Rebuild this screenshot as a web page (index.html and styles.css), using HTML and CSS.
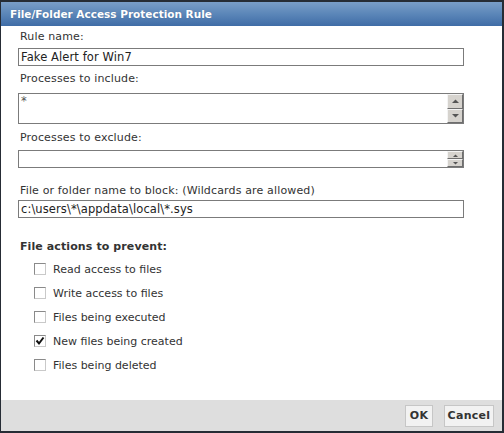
FILE: index.html
```html
<!DOCTYPE html>
<html>
<head>
<meta charset="utf-8">
<link rel="stylesheet" href="styles.css">
</head>
<body>
<div class="dialog">
  <div class="titlebar">File/Folder Access Protection Rule</div>
  <div class="content">
    <div class="label l1">Rule name:</div>
    <div class="field">Fake Alert for Win7</div>
    <div class="label l2">Processes to include:</div>
    <div class="field area">
      <div class="area-text">*</div>
      <div class="scroll tall">
        <div class="sbtn"><svg width="7" height="4" viewBox="0 0 7 4"><path d="M0 4L3.5 0.5L7 4Z" fill="#555"/></svg></div>
        <div class="sbtn"><svg width="7" height="4" viewBox="0 0 7 4"><path d="M0 0L3.5 3.5L7 0Z" fill="#555"/></svg></div>
      </div>
    </div>
    <div class="label l3">Processes to exclude:</div>
    <div class="field area short">
      <div class="area-text"></div>
      <div class="scroll">
        <div class="sbtn"><svg width="5" height="3" viewBox="0 0 5 3"><path d="M0 3L2.5 0.5L5 3Z" fill="#555"/></svg></div>
        <div class="sbtn"><svg width="5" height="3" viewBox="0 0 5 3"><path d="M0 0L2.5 2.5L5 0Z" fill="#555"/></svg></div>
      </div>
    </div>
    <div class="label l4">File or folder name to block: (Wildcards are allowed)</div>
    <div class="field f4">c:\users\*\appdata\local\*.sys</div>
    <div class="label bold">File actions to prevent:</div>
    <div class="checks">
      <div class="check"><span class="box"></span>Read access to files</div>
      <div class="check"><span class="box"></span>Write access to files</div>
      <div class="check"><span class="box"></span>Files being executed</div>
      <div class="check"><span class="box"><svg width="10" height="10" viewBox="0 0 10 10"><path d="M1.5 4.5L4 7.5L8.5 1.5" stroke="#111" stroke-width="2" fill="none"/></svg></span>New files being created</div>
      <div class="check"><span class="box"></span>Files being deleted</div>
    </div>
  </div>
  <div class="footer">
    <button class="btn ok">OK</button>
    <button class="btn cancel">Cancel</button>
  </div>
</div>
</body>
</html>
```
FILE: styles.css
```css
html, body {
  margin: 0;
  padding: 0;
}
body {
  width: 504px;
  height: 433px;
  background: #262c35;
  overflow: hidden;
  font-family: "DejaVu Sans", Verdana, sans-serif;
}
.dialog {
  margin: 2px 2px 0 1px;
  width: 501px;
  height: 429px;
  background: #fff;
  display: flex;
  flex-direction: column;
}
.titlebar {
  height: 24px;
  line-height: 24px;
  padding-left: 9px;
  color: #fff;
  font-weight: bold;
  font-size: 10.5px;
  background: linear-gradient(#7a9ec8, #5b86b8 50%, #3f6ca6);
  text-shadow: 0 0 1px rgba(0,0,0,0.2);
}
.content {
  flex: 1;
  padding: 4px 0 0 17px;
  color: #333;
  font-size: 11px;
}
.label {
  height: 14px;
  line-height: 14px;
  padding-left: 2px;
  letter-spacing: 0.15px;
}
.l1 { margin-bottom: 4px; }
.l2 { margin-top: 6px; margin-bottom: 7px; }
.l3 { margin-top: 7px; margin-bottom: 5px; }
.l4 { margin-top: 16px; margin-bottom: 2px; }
.bold { font-weight: bold; margin-top: 22px; letter-spacing: 0.1px; }
.field {
  box-sizing: border-box;
  width: 446px;
  height: 18px;
  border: 1px solid #7b7b7b;
  padding-left: 2px;
  line-height: 16px;
  font-size: 11.5px;
  color: #222;
  letter-spacing: 0.1px;
}
.area {
  height: 31px;
  display: flex;
  padding-left: 0;
}
.area.short { height: 18px; }
.area-text {
  flex: 1;
  padding-left: 2px;
  line-height: 14px;
  color: #555;
}
.scroll {
  width: 16px;
  display: flex;
  flex-direction: column;
}
.sbtn {
  flex: 1;
  box-sizing: border-box;
  background: #d6d3ce;
  border-top: 1px solid #f4f4f4;
  border-left: 1px solid #f4f4f4;
  border-right: 1px solid #6e6e6e;
  border-bottom: 1px solid #6e6e6e;
  display: flex;
  align-items: center;
  justify-content: center;
}
.checks {
  margin-top: 3px;
  padding-left: 16px;
}
.check {
  height: 24px;
  display: flex;
  align-items: center;
}
.box {
  box-sizing: border-box;
  width: 12px;
  height: 12px;
  border: 1px solid #8a8a8a;
  border-right-color: #c9c9c9;
  border-bottom-color: #c9c9c9;
  margin-right: 7px;
  display: flex;
  align-items: center;
  justify-content: center;
  background: #fff;
}
.footer {
  height: 31px;
  background: #dedede;
  display: flex;
  justify-content: flex-end;
  align-items: center;
  gap: 11px;
  padding-right: 8px;
}
.btn {
  height: 22px;
  box-sizing: border-box;
  padding: 0;
  background: #f2f2f2;
  border: 1px solid #c6c6c6;
  font-family: "DejaVu Sans", Verdana, sans-serif;
  font-weight: bold;
  font-size: 11px;
  color: #333;
  letter-spacing: 0.3px;
}
.ok { width: 28px; }
.cancel { width: 50px; }
```
